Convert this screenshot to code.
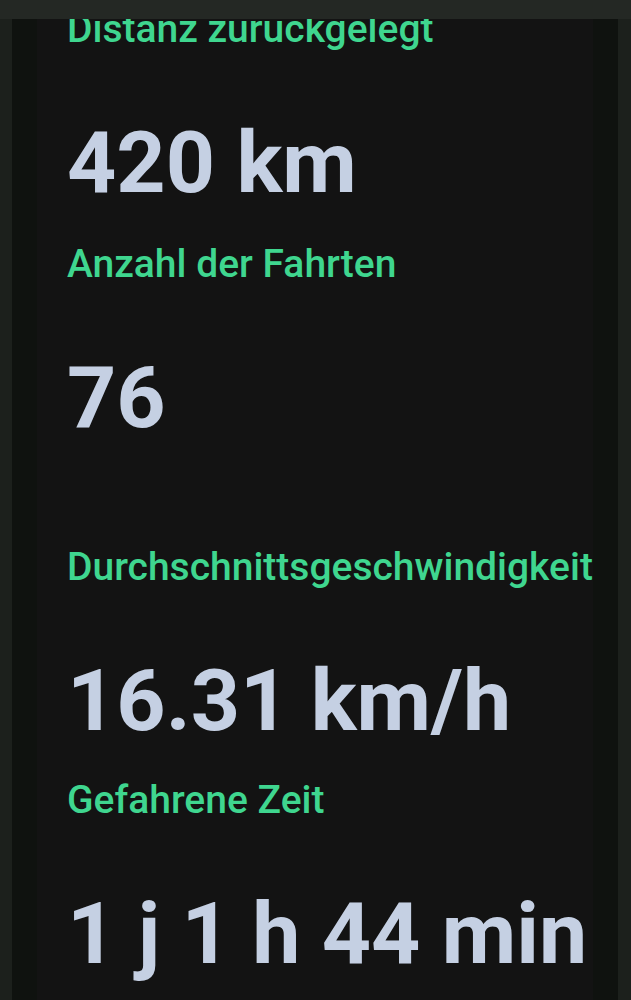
import React from "react";

const items = [
  { label: "Distanz zurückgelegt", value: "420 km", gapAfter: "mb-[29px]" },
  { label: "Anzahl der Fahrten", value: "76", gapAfter: "mb-[97px]" },
  { label: "Durchschnittsgeschwindigkeit", value: "16.31 km/h", gapAfter: "mb-[27px]" },
  { label: "Gefahrene Zeit", value: "1 j 1 h 44 min", gapAfter: "mb-[40px]" },
];

export default function App() {
  return (
    <div className="relative h-[1000px] w-[631px] overflow-hidden bg-[#1c201c] pl-[12px] pr-[13px]" style={{ fontFamily: "Roboto, 'Noto Sans', sans-serif" }}>
      <div className="absolute left-0 right-0 top-0 z-10 h-[19px] bg-[#242824]" />
      <div className="h-full bg-[#0f120f] px-[25px]">
        <div className="h-full bg-[#131313] pl-[30px] pt-[5px]">
          {items.map((it) => (
            <div key={it.label} className={it.gapAfter}>
              <div className="whitespace-nowrap text-[39px] font-medium leading-[48px] text-[#3fd68f]">{it.label}</div>
              <div className="mt-[62px] whitespace-nowrap text-[86px] font-bold leading-[96px] text-[#c5d0e3]">{it.value}</div>
            </div>
          ))}
        </div>
      </div>
    </div>
  );
}
